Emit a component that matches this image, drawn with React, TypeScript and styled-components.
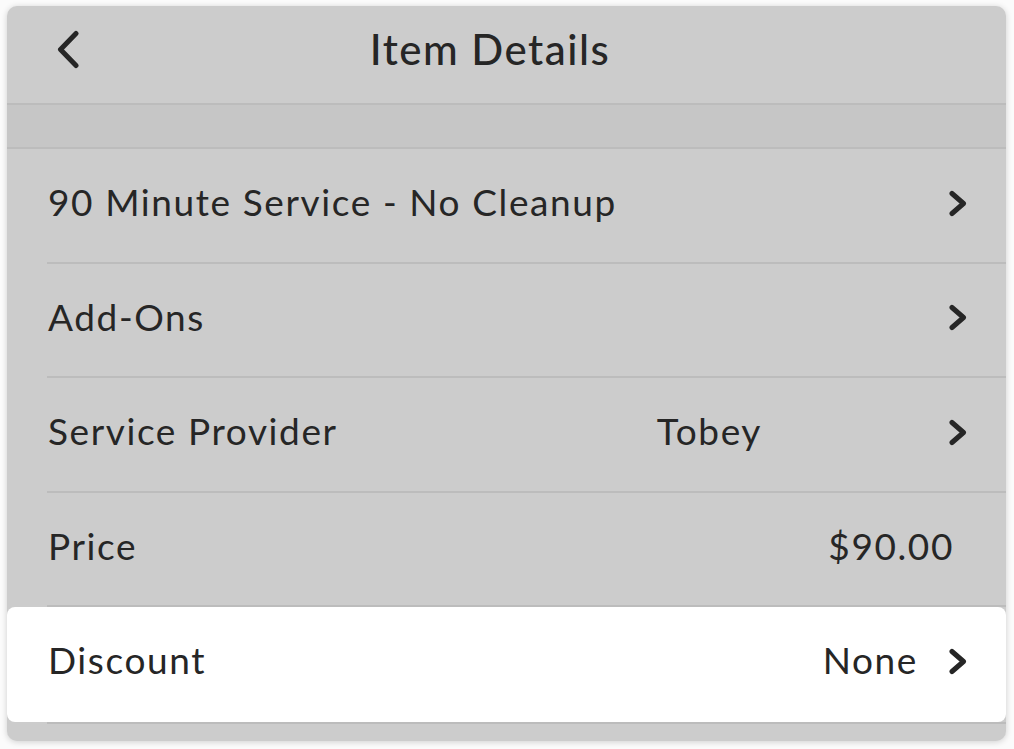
import React from "react";
import styled, { createGlobalStyle } from "styled-components";

const GlobalStyle = createGlobalStyle`
  html, body {
    margin: 0;
    padding: 0;
    background: #fbfbfb;
  }
  body {
    font-family: Lato, "Open Sans", sans-serif;
    color: #262626;
  }
`;

const Page = styled.div`
  width: 1014px;
  height: 749px;
  padding: 6px 8px 8px 7px;
  box-sizing: border-box;
`;

const Card = styled.div`
  height: 735px;
  background: #cccccc;
  border-radius: 10px;
  box-shadow: 0 1px 6px rgba(0, 0, 0, 0.18);
  display: flex;
  flex-direction: column;
  overflow: hidden;
`;

const Header = styled.div`
  height: 99px;
  box-sizing: border-box;
  padding-bottom: 11px;
  display: grid;
  grid-template-columns: 110px 1fr 110px;
  align-items: center;
  border-bottom: 2px solid #bcbcbc;
`;

const BackButton = styled.button`
  border: none;
  background: none;
  padding: 0 0 0 49px;
  display: flex;
  align-items: center;
  cursor: pointer;
`;

const Title = styled.h1`
  margin: 0;
  font-size: 42px;
  font-weight: 500;
  letter-spacing: 1.5px;
  text-align: center;
  padding-right: 33px;
  color: #262626;
`;

const Band = styled.div`
  height: 44px;
  box-sizing: border-box;
  background: #c6c6c6;
  border-bottom: 2px solid #bcbcbc;
`;

const List = styled.div`
  display: flex;
  flex-direction: column;
`;

const Row = styled.div<{ $active?: boolean }>`
  height: 114.5px;
  box-sizing: border-box;
  display: flex;
  align-items: center;
  padding: 0 38px 9px 41px;
  position: relative;
  background: ${({ $active }) => ($active ? "#ffffff" : "transparent")};
  border-radius: ${({ $active }) => ($active ? "8px" : "0")};
  &::after {
    content: "";
    position: absolute;
    left: 40px;
    right: 0;
    bottom: ${({ $active }) => ($active ? "-2px" : "0")};
    height: 2px;
    background: #bcbcbc;
  }
`;

const Label = styled.span`
  flex: 1;
  font-size: 37px;
  letter-spacing: 1.6px;
`;

const Value = styled.span<{ $gap: number }>`
  font-size: 37px;
  letter-spacing: 1.6px;
  margin-right: ${({ $gap }) => $gap}px;
`;

const ChevronBox = styled.span`
  width: 20px;
  margin-top: 3px;
  display: flex;
  align-items: center;
  justify-content: center;
`;

const Chevron = () => (
  <svg width="20" height="27" viewBox="0 0 20 27">
    <path
      d="M4 3.5 L15.5 13.5 L4 23.5"
      fill="none"
      stroke="#262626"
      strokeWidth="5"
      strokeLinecap="round"
      strokeLinejoin="round"
    />
  </svg>
);

const BackChevron = () => (
  <svg width="24" height="39" viewBox="0 0 24 39">
    <path
      d="M20 3.5 L4.5 19.5 L20 35.5"
      fill="none"
      stroke="#262626"
      strokeWidth="5"
      strokeLinecap="round"
      strokeLinejoin="round"
    />
  </svg>
);

interface Item {
  label: string;
  value?: string;
  gap?: number;
  chevron: boolean;
  active?: boolean;
}

const items: Item[] = [
  { label: "90 Minute Service - No Cleanup", chevron: true },
  { label: "Add-Ons", chevron: true },
  { label: "Service Provider", value: "Tobey", gap: 186, chevron: true },
  { label: "Price", value: "$90.00", gap: 14, chevron: false },
  { label: "Discount", value: "None", gap: 30, chevron: true, active: true },
];

const Bottom = styled.div`
  flex: 1;
`;

export default function App() {
  return (
    <>
      <GlobalStyle />
      <Page>
        <Card>
          <Header>
            <BackButton aria-label="Back">
              <BackChevron />
            </BackButton>
            <Title>Item Details</Title>
            <span />
          </Header>
          <Band />
          <List>
            {items.map((item) => (
              <Row key={item.label} $active={item.active}>
                <Label>{item.label}</Label>
                {item.value && <Value $gap={item.gap ?? 0}>{item.value}</Value>}
                {item.chevron && (
                  <ChevronBox>
                    <Chevron />
                  </ChevronBox>
                )}
              </Row>
            ))}
          </List>
          <Bottom />
        </Card>
      </Page>
    </>
  );
}
